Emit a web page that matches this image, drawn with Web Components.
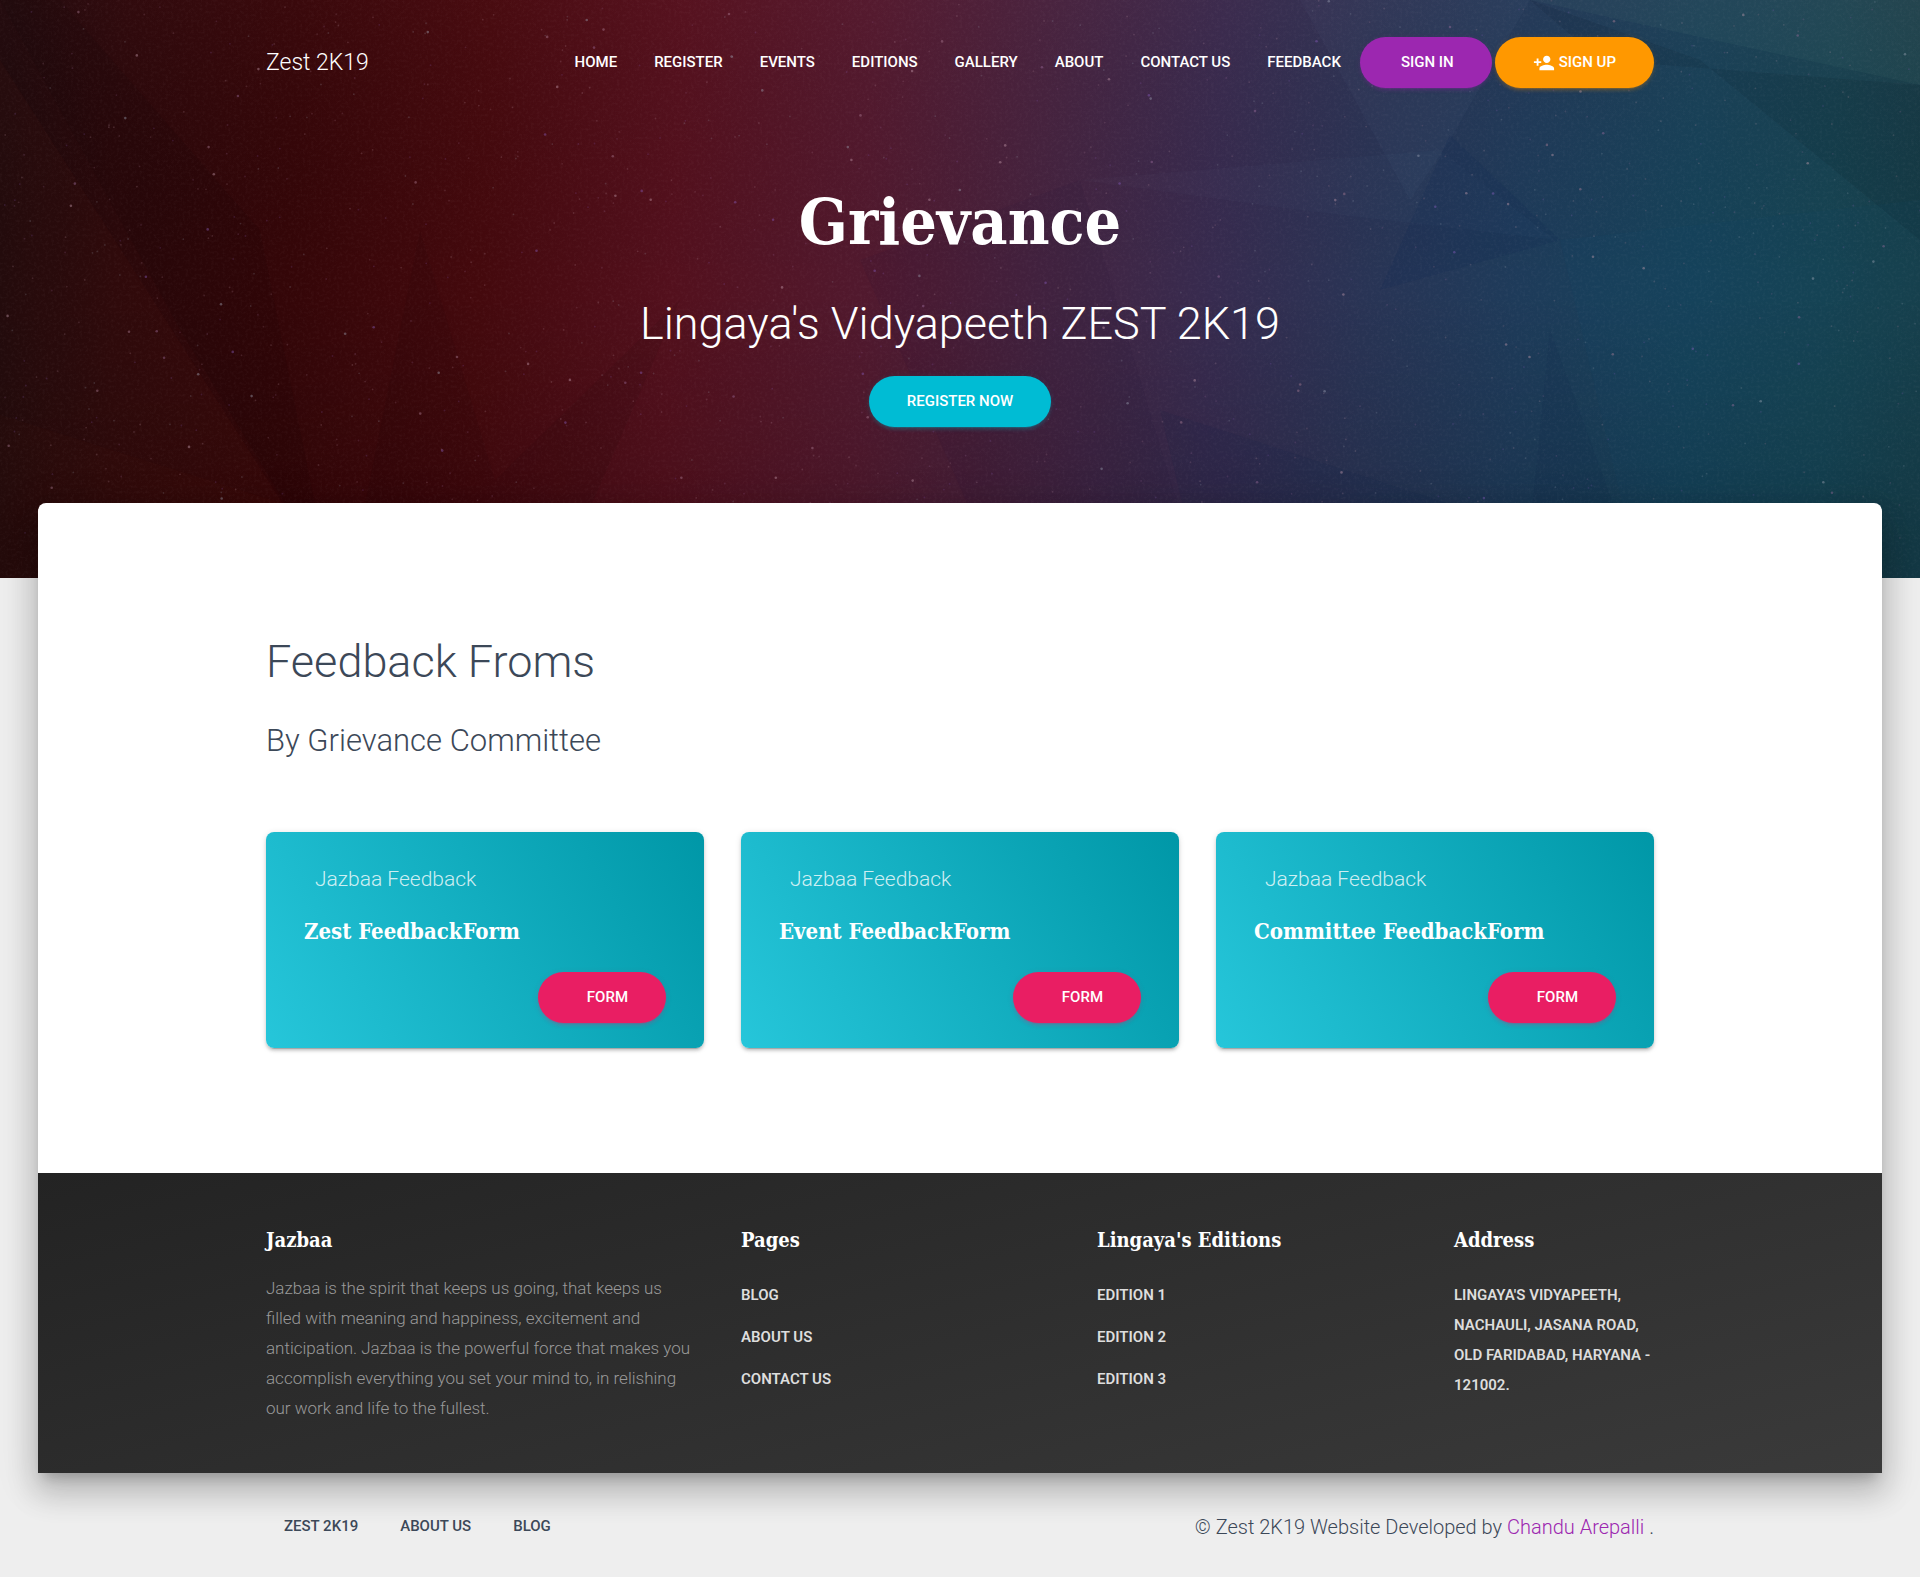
<!DOCTYPE html>
<html lang="en">
<head>
<meta charset="utf-8">
<meta name="viewport" content="width=device-width, initial-scale=1">
<title>Zest 2K19 - Grievance</title>
<style>
  :root {
    --sans: Roboto, "Liberation Sans", sans-serif;
    --slab: "Roboto Slab", "DejaVu Serif Condensed", "DejaVu Serif", serif;
    --slab-stretch: condensed;
    --ink: #3c4858;
    --purple: #9c27b0;
    --container: 1388px;
    --gutter: 37px;
  }
  body {
    margin: 0;
    background: #eee;
    color: var(--ink);
    font-family: var(--sans);
    font-weight: 300;
    font-size: 18px;
    line-height: 30px;
  }
</style>
</head>
<body>
<zest-page></zest-page>

<script>
const define = (name, markup, setup) => {
  const template = document.createElement('template');
  template.innerHTML = markup;
  customElements.define(name, class extends HTMLElement {
    constructor() {
      super();
      this.attachShadow({ mode: 'open' }).append(template.content.cloneNode(true));
    }
    connectedCallback() {
      if (setup) setup(this, this.shadowRoot);
    }
  });
};

/* Centred column shared by every band of the page */
define('page-container', `
  <style>
    :host { display: block; box-sizing: border-box; width: 100%; max-width: var(--container); margin: 0 auto; }
  </style>
  <slot></slot>`);

/* Rounded call-to-action link */
define('pill-link', `
  <style>
    :host { display: inline-flex; --pill: #00bcd4; --glow: 0, 188, 212; }
    :host([tone="purple"]) { --pill: #9c27b0; --glow: 156, 39, 176; }
    :host([tone="orange"]) { --pill: #ff9800; --glow: 255, 152, 0; }
    :host([tone="rose"]) { --pill: #e91e63; --glow: 233, 30, 99; }
    a {
      display: flex; align-items: center; gap: 4px;
      height: 51px; box-sizing: border-box; padding: 0 38px 2px;
      border-radius: 38px; background: var(--pill); color: #fff;
      font: 500 15px/20px var(--sans); text-decoration: none; text-transform: uppercase; white-space: nowrap;
      box-shadow: 0 3px 3px 0 rgba(var(--glow), .14), 0 4px 1px -3px rgba(var(--glow), .2), 0 1px 6px 0 rgba(var(--glow), .12);
    }
    :host([lead="small"]) a { padding-left: 41px; }
    :host([lead="wide"]) a { padding-left: 49px; }
  </style>
  <a href="#"><slot name="icon"></slot><slot></slot></a>`);

define('person-add-icon', `
  <style>:host { display: block; } svg { display: block; margin-top: 2px; }</style>
  <svg width="22" height="22" viewBox="0 0 24 24" fill="#fff" aria-hidden="true">
    <path d="M15 12c2.21 0 4-1.79 4-4s-1.79-4-4-4-4 1.79-4 4 1.79 4 4 4zm-9-2V7H4v3H1v2h3v3h2v-3h3v-2H6zm9 4c-2.67 0-8 1.34-8 4v2h16v-2c0-2.66-5.33-4-8-4z"/>
  </svg>`);

define('nav-item', `
  <style>
    :host { display: block; }
    a { display: block; padding: 15px 19px 16px 18px; color: inherit; font: 500 15px/20px var(--sans); text-decoration: none; text-transform: uppercase; white-space: nowrap; }
  </style>
  <a href="#"><slot></slot></a>`);

/* Starry, faceted backdrop */
define('starry-sky', `
  <style>
    :host { display: block; position: absolute; inset: 0; overflow: hidden; z-index: -1; }
    svg { display: block; width: 100%; height: 100%; }
  </style>
  <svg viewBox="0 0 1920 578" preserveAspectRatio="none" aria-hidden="true">
    <defs>
      <linearGradient id="hue" gradientUnits="userSpaceOnUse" x1="0" y1="260" x2="1920" y2="340">
        <stop offset="0" stop-color="#1d090b"/>
        <stop offset=".06" stop-color="#2a080a"/>
        <stop offset=".15" stop-color="#340608"/>
        <stop offset=".25" stop-color="#44090d"/>
        <stop offset=".35" stop-color="#53101d"/>
        <stop offset=".45" stop-color="#51192e"/>
        <stop offset=".54" stop-color="#45233f"/>
        <stop offset=".63" stop-color="#372b4f"/>
        <stop offset=".71" stop-color="#293455"/>
        <stop offset=".79" stop-color="#1e3b5a"/>
        <stop offset=".88" stop-color="#164259"/>
        <stop offset=".95" stop-color="#164352"/>
        <stop offset="1" stop-color="#173f4a"/>
      </linearGradient>
      <linearGradient id="shade" x1="0" y1="0" x2="0" y2="1">
        <stop offset="0" stop-color="#8a3040" stop-opacity=".07"/>
        <stop offset=".5" stop-color="#000" stop-opacity="0"/>
        <stop offset="1" stop-color="#000" stop-opacity=".14"/>
      </linearGradient>
      <filter id="grain" x="0" y="0" width="100%" height="100%">
        <feTurbulence type="fractalNoise" baseFrequency=".35" numOctaves="3" seed="7"/>
        <feColorMatrix values="0 0 0 0 1  0 0 0 0 .85  0 0 0 0 .9  0 0 0 1.6 -.72"/>
      </filter>
    </defs>
    <rect width="1920" height="578" fill="url(#hue)"/>
    <rect width="1920" height="578" fill="url(#shade)"/>
    <path d="M0 60 L330 578 H0Z" fill="#8a3020" opacity=".06"/>
    <path d="M0 0H60L260 230 330 578 180 330Z" fill="#000" opacity=".07"/>
    <path d="M420 230L495 480 680 300 560 578H350Z" fill="#000" opacity=".06"/>
    <path d="M0 415L520 578H0Z" fill="#a03a20" opacity=".03"/>
    <path d="M860 260L1080 180 1200 578H1000Z" fill="#141033" opacity=".08"/>
    <path d="M1080 180L1300 210 1555 240 1440 150Z" fill="#8090c0" opacity=".03"/>
    <path d="M1300 0H1530L1450 140 1410 200Z" fill="#6f87b0" opacity=".05"/>
    <path d="M1450 135L1560 240 1380 290Z" fill="#0a2450" opacity=".16"/>
    <path d="M1530 0L1920 85V0Z" fill="#7fa6a0" opacity=".06"/>
    <path d="M1530 0L1600 60 1920 85V240L1700 60Z" fill="#001018" opacity=".09"/>
    <path d="M1160 410L1530 530 1550 330 1640 578H1200Z" fill="#0a1c40" opacity=".1"/>
    <path d="M1560 240L1920 200V578H1640Z" fill="#0a5070" opacity=".08"/>
    <rect width="1920" height="578" filter="url(#grain)" opacity=".05"/>
    <g class="stars"></g>
  </svg>`, (host, root) => {
  /* Seeded generator keeps the star field the same on every load */
  let seed = 2019;
  const random = () => (seed = (seed * 16807) % 2147483647) / 2147483647;
  const colours = ['#c8a0b0', '#b08098', '#8a60c0', '#a0a8b8', '#a070a0'];
  let circles = '';
  for (let i = 0; i < 1300; i++) {
    const bright = random() < .12;
    circles += `<circle cx="${(random() * 1920).toFixed(1)}" cy="${(random() * 578).toFixed(1)}" r="${bright ? 1.3 : .9}" fill="${colours[Math.floor(random() * 5)]}" opacity="${bright ? .42 : .2}"/>`;
  }
  root.querySelector('.stars').innerHTML = circles;
});

define('site-header', `
  <style>
    :host { display: block; position: relative; isolation: isolate; color: #fff; padding: 37px 38px 151px; }
    nav { display: flex; align-items: center; justify-content: space-between; }
    .brand { color: inherit; font-size: 23px; line-height: 51px; text-decoration: none; white-space: nowrap; }
    .menu { display: flex; align-items: center; }
    .actions { display: flex; gap: 3px; }
    .hero { display: flex; flex-direction: column; align-items: center; padding-top: 94px; text-align: center; }
    h1 { margin: 0 0 28px; font: bold 64px/80px var(--slab); font-stretch: var(--slab-stretch); }
    p { margin: 0 0 18px; font-size: 45px; line-height: 68px; }
  </style>
  <starry-sky></starry-sky>
  <page-container>
    <nav aria-label="Main">
      <a class="brand" href="#">Zest 2K19</a>
      <div class="menu">
        <nav-item>Home</nav-item>
        <nav-item>Register</nav-item>
        <nav-item>Events</nav-item>
        <nav-item>Editions</nav-item>
        <nav-item>Gallery</nav-item>
        <nav-item>About</nav-item>
        <nav-item>Contact Us</nav-item>
        <nav-item>Feedback</nav-item>
        <div class="actions">
          <pill-link tone="purple" lead="small">Sign In</pill-link>
          <pill-link tone="orange"><person-add-icon slot="icon"></person-add-icon>Sign Up</pill-link>
        </div>
      </div>
    </nav>
    <div class="hero">
      <h1>Grievance</h1>
      <p>Lingaya's Vidyapeeth ZEST 2K19</p>
      <pill-link>Register Now</pill-link>
    </div>
  </page-container>`);

define('feedback-card', `
  <style>
    :host {
      display: flex; flex-direction: column; box-sizing: border-box; padding: 31px 38px 25px;
      border-radius: 8px; color: #fff; background: linear-gradient(60deg, #26c6da, #0097a7);
      box-shadow: 0 3px 3px 0 rgba(0,0,0,.14), 0 4px 1px -3px rgba(0,0,0,.2), 0 1px 6px 0 rgba(0,0,0,.12);
    }
    .label { margin: 0 0 21px; padding-left: 11px; font-size: 21px; line-height: 32px; color: rgba(255,255,255,.8); }
    h3 { margin: 0 0 26px; font: bold 22px/30px var(--slab); font-stretch: var(--slab-stretch); }
    pill-link { align-self: flex-end; }
  </style>
  <p class="label">Jazbaa Feedback</p>
  <h3><slot></slot></h3>
  <pill-link tone="rose" lead="wide">Form</pill-link>`);

define('feedback-section', `
  <style>
    :host { display: block; padding: 125px 0; }
    h2 { margin: 0 0 21px; font-weight: 300; font-size: 45px; line-height: 68px; }
    .sub { margin: 0 0 67px; font-size: 31px; line-height: 48px; }
    .cards { display: grid; grid-template-columns: repeat(3, 1fr); gap: var(--gutter); }
  </style>
  <page-container>
    <h2>Feedback Froms</h2>
    <p class="sub">By Grievance Committee</p>
    <div class="cards">
      <feedback-card>Zest FeedbackForm</feedback-card>
      <feedback-card>Event FeedbackForm</feedback-card>
      <feedback-card>Committee FeedbackForm</feedback-card>
    </div>
  </page-container>`);

define('footer-column', `
  <style>
    :host { display: block; }
    h4 { margin: 0 0 18px; color: #fff; font: bold 20px/30px var(--slab); font-stretch: var(--slab-stretch); }
  </style>
  <h4></h4><slot></slot>`, (host, root) => {
  root.querySelector('h4').textContent = host.getAttribute('heading');
});

define('site-footer', `
  <style>
    :host { display: block; padding: 52px 0 50px; color: #999; background: linear-gradient(165deg, #232323, #3a3a3a); }
    .columns { display: grid; grid-template-columns: 475fr 356fr 357fr 200fr; }
    p { margin: 0; padding-right: 44px; line-height: 30px; font-size: 17px; }
    ul { display: flex; flex-direction: column; gap: 12px; margin: 0; padding: 7px 0 0; list-style: none; }
    a { display: block; color: #ddd; font: 600 15px/30px var(--sans); text-decoration: none; text-transform: uppercase; }
  </style>
  <page-container>
    <div class="columns">
      <footer-column heading="Jazbaa">
        <p>Jazbaa is the spirit that keeps us going, that keeps us filled with meaning and happiness, excitement and anticipation. Jazbaa is the powerful force that makes you accomplish everything you set your mind to, in relishing our work and life to the fullest.</p>
      </footer-column>
      <footer-column heading="Pages">
        <ul><li><a href="#">Blog</a></li><li><a href="#">About Us</a></li><li><a href="#">Contact Us</a></li></ul>
      </footer-column>
      <footer-column heading="Lingaya's Editions">
        <ul><li><a href="#">Edition 1</a></li><li><a href="#">Edition 2</a></li><li><a href="#">Edition 3</a></li></ul>
      </footer-column>
      <footer-column heading="Address">
        <ul><li><a href="#">Lingaya's Vidyapeeth, Nachauli, Jasana Road, Old Faridabad, Haryana - 121002.</a></li></ul>
      </footer-column>
    </div>
  </page-container>`);

define('credit-bar', `
  <style>
    :host { display: block; padding: 28px 38px 25px; }
    .row { display: flex; justify-content: space-between; align-items: center; }
    ul { display: flex; gap: 5px; margin: 0; padding: 0; list-style: none; }
    small { font-size: 20px; line-height: 32px; }
    small a { color: var(--purple); text-decoration: none; }
  </style>
  <page-container>
    <div class="row">
      <ul>
        <li><nav-item>Zest 2K19</nav-item></li>
        <li><nav-item>About Us</nav-item></li>
        <li><nav-item>Blog</nav-item></li>
      </ul>
      <small>© Zest 2K19 Website Developed by <a href="#">Chandu Arepalli</a> .</small>
    </div>
  </page-container>`);

define('zest-page', `
  <style>
    :host { display: block; }
    main {
      position: relative; margin: -75px 38px 0; background: #fff; border-radius: 8px 8px 0 0;
      box-shadow: 0 20px 30px 3px rgba(0,0,0,.14), 0 8px 38px 6px rgba(0,0,0,.12), 0 10px 13px -6px rgba(0,0,0,.2);
    }
    credit-bar { position: relative; }
  </style>
  <site-header></site-header>
  <main>
    <feedback-section></feedback-section>
    <site-footer></site-footer>
  </main>
  <credit-bar></credit-bar>`);
</script>
</body>
</html>
